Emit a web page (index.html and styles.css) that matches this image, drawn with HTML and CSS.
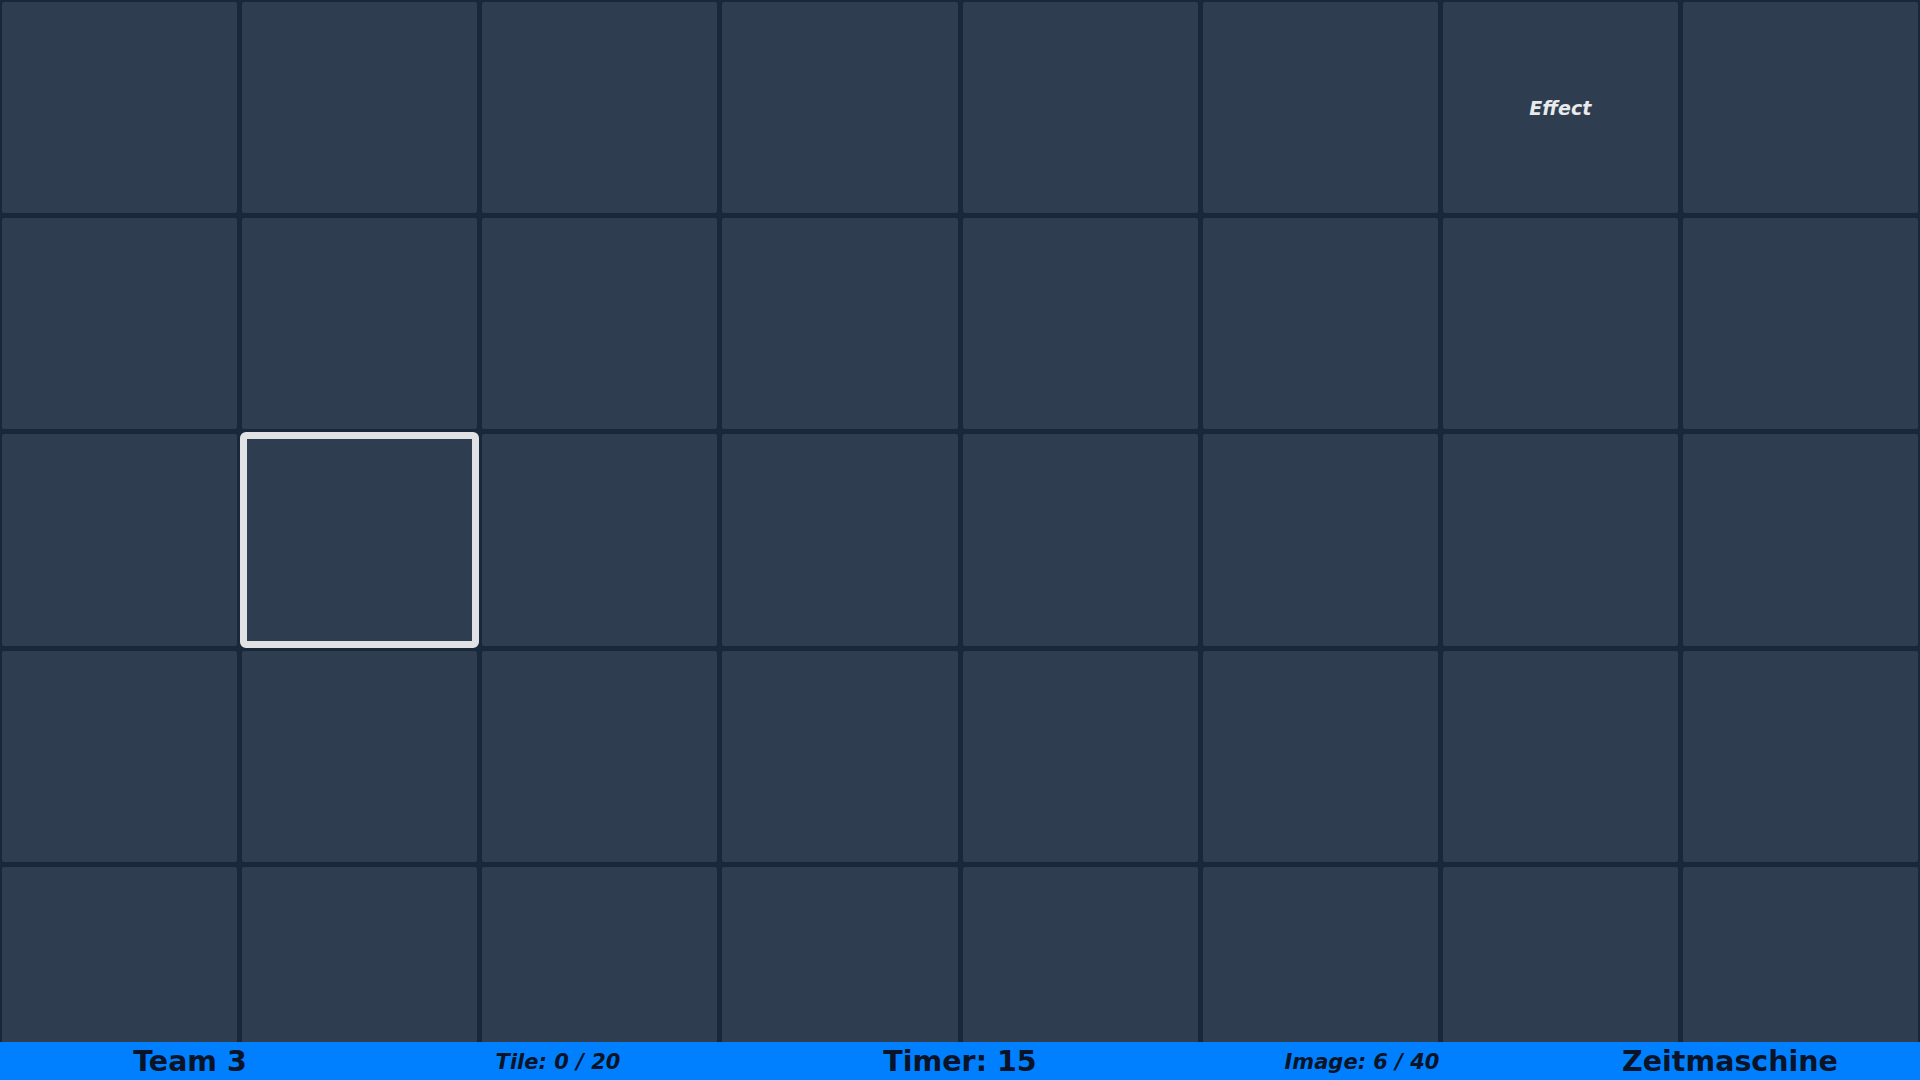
FILE: index.html
```html
<!DOCTYPE html>
<html lang="de">
<head>
<meta charset="utf-8">
<title>Zeitmaschine</title>
<link rel="stylesheet" href="styles.css">
</head>
<body>
<main class="board">
  <div class="tile"></div><div class="tile"></div><div class="tile"></div><div class="tile"></div><div class="tile"></div><div class="tile"></div><div class="tile"><span class="effect">Effect</span></div><div class="tile"></div>
  <div class="tile"></div><div class="tile"></div><div class="tile"></div><div class="tile"></div><div class="tile"></div><div class="tile"></div><div class="tile"></div><div class="tile"></div>
  <div class="tile"></div><div class="tile selected"></div><div class="tile"></div><div class="tile"></div><div class="tile"></div><div class="tile"></div><div class="tile"></div><div class="tile"></div>
  <div class="tile"></div><div class="tile"></div><div class="tile"></div><div class="tile"></div><div class="tile"></div><div class="tile"></div><div class="tile"></div><div class="tile"></div>
  <div class="tile"></div><div class="tile"></div><div class="tile"></div><div class="tile"></div><div class="tile"></div><div class="tile"></div><div class="tile"></div><div class="tile"></div>
</main>
<footer class="statusbar">
  <div class="item big">Team 3</div>
  <div class="item small">Tile: 0 / 20</div>
  <div class="item big">Timer: 15</div>
  <div class="item small">Image: 6 / 40</div>
  <div class="item big">Zeitmaschine</div>
</footer>
</body>
</html>
```

FILE: styles.css
```css
html, body {
  margin: 0;
  padding: 0;
  width: 1920px;
  height: 1080px;
  overflow: hidden;
  background: #1a283b;
  font-family: "DejaVu Sans", Verdana, sans-serif;
}

.board {
  display: grid;
  grid-template-columns: repeat(8, 1fr);
  grid-template-rows: repeat(5, 1fr);
  gap: 1px;
  width: 1920px;
  height: 1080px;
}

.tile {
  box-sizing: border-box;
  background: #2e3e50;
  border: 2px solid #192739;
  border-radius: 4px;
  display: flex;
  align-items: center;
  justify-content: center;
}

.tile.selected {
  border: 7px solid #e1e2e4;
  border-radius: 6px;
}

.effect {
  color: #e8eaec;
  font-size: 19px;
  font-weight: bold;
  font-style: italic;
}

.statusbar {
  position: fixed;
  left: 0;
  bottom: 0;
  width: 1920px;
  height: 38px;
  background: #0080ff;
  display: grid;
  grid-template-columns: 380px 356px 448px 356px 380px;
  align-items: center;
  color: #0a1426;
}

.item {
  text-align: center;
  line-height: 40px;
  white-space: nowrap;
  font-weight: bold;
}

.item.big {
  font-size: 28.5px;
}

.item.small {
  font-size: 21px;
  font-style: italic;
}
```
